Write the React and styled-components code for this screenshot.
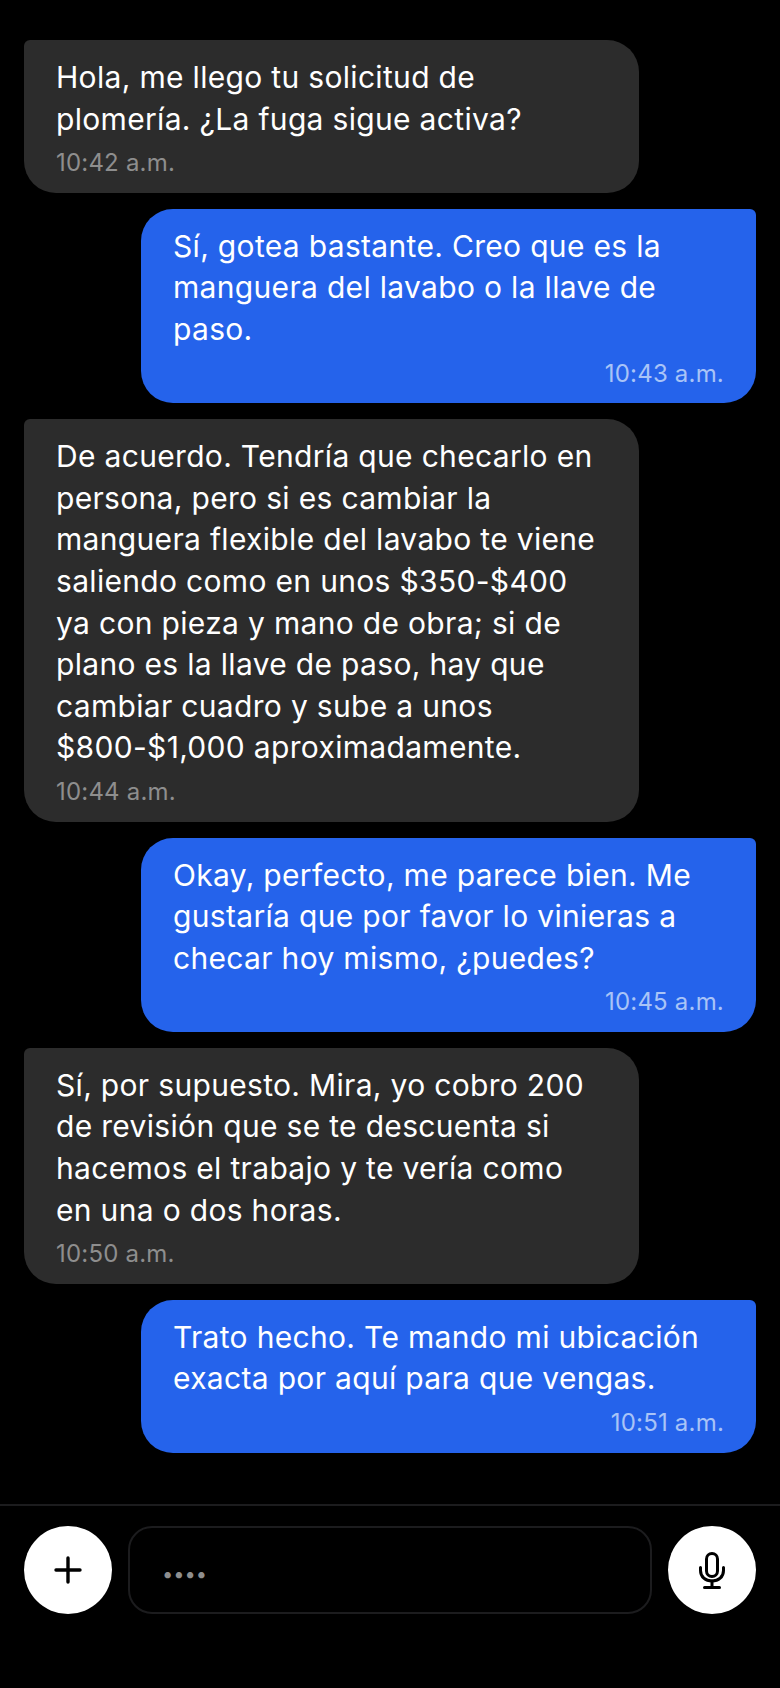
import React from "react";
import styled, { createGlobalStyle } from "styled-components";

const GlobalStyle = createGlobalStyle`
  html, body {
    margin: 0;
    padding: 0;
    background: #000;
  }
  * {
    box-sizing: border-box;
  }
`;

const Screen = styled.div`
  width: 780px;
  height: 1688px;
  display: flex;
  flex-direction: column;
  background: #000;
  font-family: Inter, "Noto Sans", sans-serif;
  overflow: hidden;
`;

const Messages = styled.div`
  flex: 1;
  display: flex;
  flex-direction: column;
  gap: 16px;
  padding: 40px 24px 0;
`;

const Bubble = styled.div`
  width: 615px;
  padding: 17px 32px 13px;
  align-self: ${(p) => (p.$mine ? "flex-end" : "flex-start")};
  background: ${(p) => (p.$mine ? "#2563eb" : "#2c2c2c")};
  border-radius: ${(p) => (p.$mine ? "32px 6px 32px 32px" : "6px 32px 32px 32px")};
`;

const Body = styled.div`
  color: #fff;
  font-size: 30px;
  line-height: 41.6px;
  letter-spacing: 0.32px;
`;

const Time = styled.div`
  margin-top: 6px;
  font-size: 24px;
  line-height: 33.6px;
  letter-spacing: 0.2px;
  color: ${(p) => (p.$mine ? "#a9c4f7" : "#8e8e8e")};
  text-align: ${(p) => (p.$mine ? "right" : "left")};
`;

const Composer = styled.div`
  height: 184px;
  display: flex;
  align-items: flex-start;
  gap: 16px;
  padding: 20px 24px 0;
  border-top: 2px solid #1c1c1e;
`;

const RoundButton = styled.button`
  width: 88px;
  height: 88px;
  flex: none;
  display: flex;
  align-items: center;
  justify-content: center;
  padding: 0;
  border: none;
  border-radius: 50%;
  background: #fff;
  color: #000;
`;

const Field = styled.div`
  flex: 1;
  height: 88px;
  display: flex;
  align-items: center;
  padding: 7px 32px 0;
  border: 2px solid #1c1c1e;
  border-radius: 24px;
  color: #8e8e8e;
  font-size: 20px;
`;

const PlusIcon = () => (
  <svg width="28" height="28" viewBox="0 0 28 28" fill="none" stroke="#000" strokeWidth="3.4" strokeLinecap="round">
    <path d="M14 2v24M2 14h24" />
  </svg>
);

const MicIcon = () => (
  <svg width="26" height="37" viewBox="0 0 26 37" fill="none" stroke="#000" strokeWidth="3" strokeLinecap="round">
    <rect x="7.500" y="1.500" width="11" height="23" rx="5.500" />
    <path d="M1.500 15.500v3c0 6.500 5 10.500 11.500 10.500s11.500-4 11.500-10.500v-3" />
    <path d="M13 29v6" />
    <path d="M5.500 35.500h15" />
  </svg>
);

const messages = [
  { id: 1, text: "Hola, me llego tu solicitud de plomería. ¿La fuga sigue activa?", time: "10:42 a.m." },
  { id: 2, mine: true, text: "Sí, gotea bastante. Creo que es la manguera del lavabo o la llave de paso.", time: "10:43 a.m." },
  {
    id: 3,
    text: "De acuerdo. Tendría que checarlo en persona, pero si es cambiar la manguera flexible del lavabo te viene saliendo como en unos $350-$400 ya con pieza y mano de obra; si de plano es la llave de paso, hay que cambiar cuadro y sube a unos $800-$1,000 aproximadamente.",
    time: "10:44 a.m.",
  },
  { id: 4, mine: true, text: "Okay, perfecto, me parece bien. Me gustaría que por favor lo vinieras a checar hoy mismo, ¿puedes?", time: "10:45 a.m." },
  { id: 5, text: "Sí, por supuesto. Mira, yo cobro 200 de revisión que se te descuenta si hacemos el trabajo y te vería como en una o dos horas.", time: "10:50 a.m." },
  { id: 6, mine: true, text: "Trato hecho. Te mando mi ubicación exacta por aquí para que vengas.", time: "10:51 a.m." },
];

export default function App() {
  return (
    <Screen>
      <GlobalStyle />
      <Messages>
        {messages.map((m) => (
          <Bubble key={m.id} $mine={m.mine}>
            <Body>{m.text}</Body>
            <Time $mine={m.mine}>{m.time}</Time>
          </Bubble>
        ))}
      </Messages>
      <Composer>
        <RoundButton>
          <PlusIcon />
        </RoundButton>
        <Field>••••</Field>
        <RoundButton>
          <MicIcon />
        </RoundButton>
      </Composer>
    </Screen>
  );
}
